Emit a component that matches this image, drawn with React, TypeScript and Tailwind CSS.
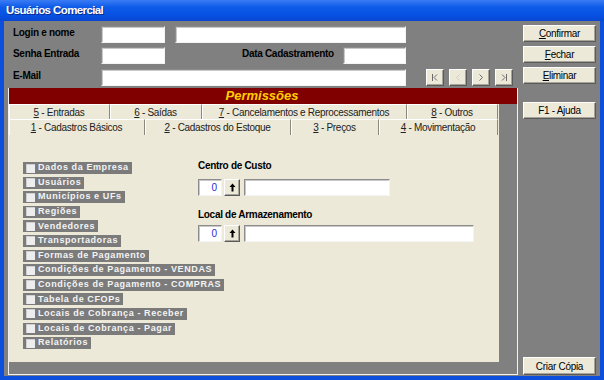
import React from "react";

const ui = "font-['Liberation_Sans',Arial,sans-serif]";

const permissoes = [
  "Dados da Empresa",
  "Usuários",
  "Municípios e UFs",
  "Regiões",
  "Vendedores",
  "Transportadoras",
  "Formas de Pagamento",
  "Condições de Pagamento - VENDAS",
  "Condições de Pagamento - COMPRAS",
  "Tabela de CFOPs",
  "Locais de Cobrança - Receber",
  "Locais de Cobrança - Pagar",
  "Relatórios",
];

// Sunken white edit box
function Field({ className = "", children }: { className?: string; children?: React.ReactNode }) {
  return (
    <div
      className={`h-[17px] bg-white border border-t-[#8c8c8c] border-l-[#8c8c8c] border-b-[#f4f4f4] border-r-[#f4f4f4] shadow-[inset_1px_1px_0_#c8c8c8] ${className}`}
    >
      {children}
    </div>
  );
}

// Raised classic button
function Btn({ children, className = "" }: { children: React.ReactNode; className?: string }) {
  return (
    <div
      className={`flex items-center justify-center bg-[#ece9d8] border border-t-white border-l-white border-b-[#5a5a5a] border-r-[#5a5a5a] shadow-[inset_-1px_-1px_0_#a7a59a] text-[10px] tracking-[-0.3px] text-black ${className}`}
    >
      {children}
    </div>
  );
}

function Tab({ n, label, w }: { n: string; label: string; w: number }) {
  return (
    <div
      style={{ width: w }}
      className="h-full flex items-center justify-center border-t border-t-white border-r border-r-[#8a887e] shadow-[inset_1px_0_0_#ffffff] text-[10px] tracking-[-0.3px] text-[#222]"
    >
      <span className="underline">{n}</span>
      <span>&nbsp;- {label}</span>
    </div>
  );
}

function NavBtn({ kind }: { kind: "first" | "prev" | "next" | "last" }) {
  const c = kind === "prev" ? "#cfcdc2" : "#6b6b6b";
  return (
    <Btn className="w-[18px] h-[17px]">
      <svg width="10" height="9" viewBox="0 0 10 9" fill="none" stroke={c} strokeWidth="1">
        {kind === "first" && <path d="M2.5 1v7M7 1.5 4 4.5 7 7.5" />}
        {kind === "prev" && <path d="M6.5 1.5 3.5 4.5 6.5 7.5" />}
        {kind === "next" && <path d="M3.5 1.5 6.5 4.5 3.5 7.5" />}
        {kind === "last" && <path d="M7.5 1v7M3 1.5 6 4.5 3 7.5" />}
      </svg>
    </Btn>
  );
}

function Lookup({ width }: { width: number }) {
  return (
    <div className="flex items-center h-[17px]">
      <Field className="w-[24px] flex items-center justify-end pr-[4px] text-[10px] text-[#2b2bd6]">0</Field>
      <Btn className="w-[16px] h-[17px] ml-[2px]">
        <svg width="7" height="9" viewBox="0 0 7 9" fill="#000">
          <path d="M3.5 0.5 6.5 4H4.5V8.5H2.5V4H0.5Z" />
        </svg>
      </Btn>
      <Field className="ml-[4px]">
        <div style={{ width: width - 2 }} />
      </Field>
    </div>
  );
}

const lbl = "text-[10px] font-bold tracking-[-0.3px] text-black whitespace-nowrap";
const formLbl = `${lbl} self-start leading-[13px]`;

export default function App() {
  return (
    <div className={`w-[604px] h-[380px] flex flex-col bg-[#0b4fdc] overflow-hidden ${ui}`}>
      {/* Title bar */}
      <div className="h-[21px] flex items-center pl-[6px] bg-[linear-gradient(#3a7cf4,#0d5ae8_35%,#0650e2_75%,#0a47cf)]">
        <span className="text-white font-bold text-[11.5px] tracking-[-0.6px] [text-shadow:1px_1px_0_#0a2a8a]">
          Usuários Comercial
        </span>
      </div>

      {/* Body */}
      <div className="flex-1 mx-[4px] mb-[4px] bg-[#808080] flex">
        {/* Left side */}
        <div className="w-[519px] flex flex-col">
          <div className="pl-[9px] pt-[5px] flex flex-col">
            <div className="flex items-center h-[17px]">
              <span className={`w-[88px] ${formLbl}`}>Login e nome</span>
              <Field className="w-[64px]" />
              <Field className="w-[231px] ml-[10px]" />
            </div>
            <div className="flex items-center h-[17px] mt-[4px]">
              <span className={`w-[88px] ${formLbl}`}>Senha Entrada</span>
              <Field className="w-[64px]" />
              <span className={`ml-[77px] w-[101px] ${formLbl}`}>Data Cadastramento</span>
              <Field className="w-[63px]" />
            </div>
            <div className="flex items-center h-[17px] mt-[5px]">
              <span className={`w-[88px] ${formLbl}`}>E-Mail</span>
              <Field className="w-[305px]" />
              <div className="flex gap-[5px] ml-[20px]">
                <NavBtn kind="first" />
                <NavBtn kind="prev" />
                <NavBtn kind="next" />
                <NavBtn kind="last" />
              </div>
            </div>
          </div>

          {/* Permissões frame */}
          <div className="ml-[4px] mt-[2px] w-[510px] h-[287px] border-l border-r border-b border-[#f2f2f2] flex flex-col">
            <div className="h-[16px] bg-[#800000] flex items-center justify-center">
              <span className="text-[#ffcc00] font-bold italic text-[13px] pr-[2px]">Permissões</span>
            </div>
            <div className="w-[490px] h-[258px] bg-[#ece9d8] flex flex-col">
              <div className="h-[15px] flex">
                <Tab n="5" label="Entradas" w={101} />
                <Tab n="6" label="Saídas" w={92} />
                <Tab n="7" label="Cancelamentos e Reprocessamentos" w={205} />
                <Tab n="8" label="Outros" w={91} />
              </div>
              <div className="h-[16px] flex">
                <Tab n="1" label="Cadastros Básicos" w={136} />
                <Tab n="2" label="Cadastros do Estoque" w={146} />
                <Tab n="3" label="Preços" w={88} />
                <Tab n="4" label="Movimentação" w={119} />
              </div>

              <div className="flex-1 flex pl-[14px] pt-[27px]">
                <div className="w-[175px] flex flex-col gap-[2.6px]">
                  {permissoes.map((p) => (
                    <div key={p} className="self-start h-[12px] flex items-center bg-[#7b7b7b] pl-[3px] pr-[3px]">
                      <div className="w-[9px] h-[9px] bg-[#ededed] border-t border-l border-[#d0d0d0]" />
                      <span className="ml-[3px] text-[9px] font-bold tracking-[0.6px] text-[#f4f4f4] whitespace-nowrap">
                        {p}
                      </span>
                    </div>
                  ))}
                </div>
                <div className="flex flex-col">
                  <span className={`${lbl} leading-[12px] -mt-[2px]`}>Centro de Custo</span>
                  <div className="mt-[7px]">
                    <Lookup width={146} />
                  </div>
                  <span className={`${lbl} leading-[12px] mt-[13px]`}>Local de Armazenamento</span>
                  <div className="mt-[4px]">
                    <Lookup width={230} />
                  </div>
                </div>
              </div>
            </div>
          </div>
        </div>

        {/* Right buttons */}
        <div className="w-[73px] flex flex-col pt-[4px] pb-[1px]">
          <Btn className="h-[17px]"><span><span className="underline">C</span>onfirmar</span></Btn>
          <Btn className="h-[17px] mt-[4px]"><span><span className="underline">F</span>echar</span></Btn>
          <Btn className="h-[17px] mt-[4px]"><span><span className="underline">E</span>liminar</span></Btn>
          <Btn className="h-[17px] mt-[18px]">F1 - Ajuda</Btn>
          <Btn className="h-[18px] mt-auto">Criar Cópia</Btn>
        </div>
      </div>
    </div>
  );
}
